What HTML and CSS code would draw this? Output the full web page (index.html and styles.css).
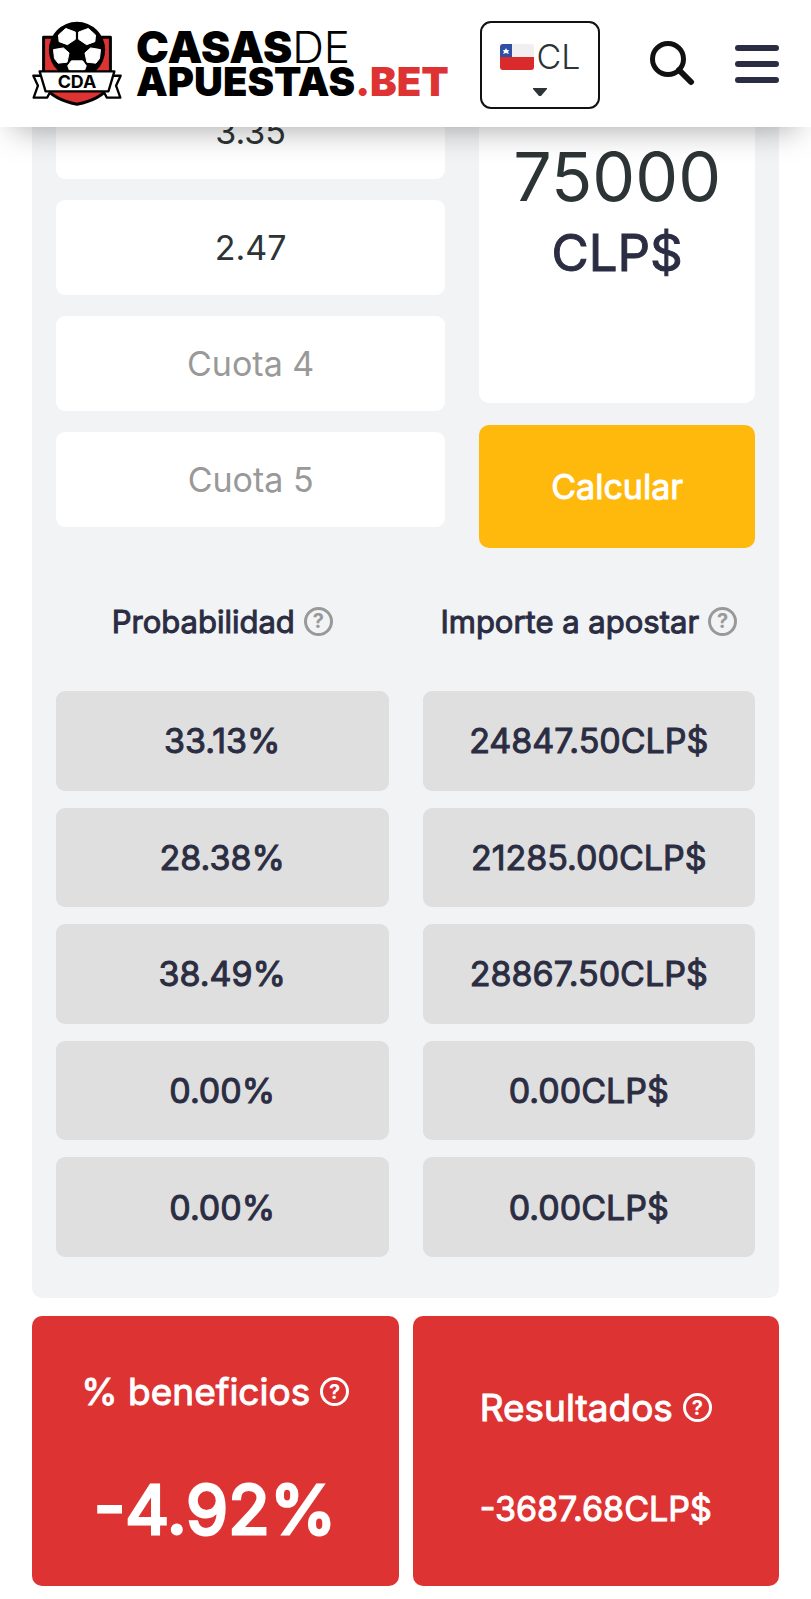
FILE: index.html
```html
<!DOCTYPE html>
<html lang="es">
<head>
<meta charset="utf-8">
<meta name="viewport" content="width=device-width, initial-scale=1">
<title>Calculadora de apuestas</title>
<link rel="stylesheet" href="styles.css">
</head>
<body>
<header class="header">
  <a class="logo" href="#">
    <svg class="logo-badge" viewBox="33 30 272 256" aria-hidden="true">
      <path d="M68 79H270V225Q240 268 169 281Q98 268 68 225Z" fill="#dd3333" stroke="#000" stroke-width="9" stroke-linejoin="round"/>
      <circle cx="169" cy="117" r="85" fill="#000"/>
      <g fill="#fff" stroke="#fff" stroke-width="3" stroke-linejoin="round">
        <path d="M135 52L164 63V85L140 101L115 92L113 72Z"/>
        <path d="M203 52L174 63V85L198 101L223 92L225 72Z"/>
        <path d="M98 116L128 111L145 126L139 154L112 157L101 143Z"/>
        <path d="M240 116L210 111L193 126L199 154L226 157L237 143Z"/>
        <path d="M152 150H186L197 165L192 178H146L141 165Z"/>
      </g>
      <g fill="#fff" stroke="#000" stroke-width="7" stroke-linejoin="round">
        <path d="M62 195H37L51 225L38 261H79L90 240Z"/>
        <path d="M276 195H301L287 225L300 261H259L248 240Z"/>
        <path d="M56 182H282L264 242H74Z"/>
      </g>
      <text class="badge-text" x="169" y="233" text-anchor="middle">CDA</text>
    </svg>
    <span class="logo-words">
      <span class="logo-top">CASAS<span class="logo-thin">DE</span></span>
      <span class="logo-bottom">APUESTAS<span class="logo-red">.BET</span></span>
    </span>
  </a>
  <button class="country" type="button" aria-haspopup="listbox">
    <span class="country-row">
      <svg class="flag" viewBox="0 0 34 26" aria-hidden="true">
        <rect width="34" height="26" rx="3" fill="#f1eff1"/>
        <path d="M0 13H34V23Q34 26 31 26H3Q0 26 0 23Z" fill="#d92b2b"/>
        <path d="M0 13V3Q0 0 3 0H12V13Z" fill="#2f4fa5"/>
        <path d="M6 4L7 6H9L8 8L9 10L6 9L3 10L4 8L3 6H5Z" fill="#fff"/>
      </svg>
      <span>CL</span>
    </span>
    <svg class="caret" viewBox="0 0 14 8" aria-hidden="true"><path d="M0 0H14V1L8 8H6L0 1Z" fill="#2d3436"/></svg>
  </button>
  <button class="icon-button search" type="button" aria-label="Buscar">
    <svg viewBox="0 0 46 46" width="46" height="46" fill="none" stroke="#111" stroke-width="5" stroke-linecap="round"><circle cx="19" cy="18" r="15.5"/><path d="M30 29L42 41" stroke-width="6"/></svg>
  </button>
  <button class="icon-button menu" type="button" aria-label="Menú">
    <svg viewBox="0 0 44 38" width="44" height="38" stroke="#2b2d42" stroke-width="6" stroke-linecap="round"><path d="M3 3H41M3 19H41M3 35H41"/></svg>
  </button>
</header>

<main class="main">
  <section class="panel">
    <form class="form">
      <div class="odds">
        <input class="field" type="text" aria-label="Cuota 2" value="3.35">
        <input class="field" type="text" aria-label="Cuota 3" value="2.47">
        <input class="field" type="text" aria-label="Cuota 4" placeholder="Cuota 4">
        <input class="field" type="text" aria-label="Cuota 5" placeholder="Cuota 5">
      </div>
      <div class="stake">
        <div class="amount">
          <input class="amount-input" id="amount" type="text" value="75000">
          <label class="amount-currency" for="amount">CLP$</label>
        </div>
        <button class="calculate" type="button">Calcular</button>
      </div>
    </form>
    <table class="results">
      <thead>
        <tr>
          <th>Probabilidad <button class="help" type="button">?</button></th>
          <th>Importe a apostar <button class="help" type="button">?</button></th>
        </tr>
      </thead>
      <tbody>
        <tr><td>33.13%</td><td>24847.50CLP$</td></tr>
        <tr><td>28.38%</td><td>21285.00CLP$</td></tr>
        <tr><td>38.49%</td><td>28867.50CLP$</td></tr>
        <tr><td>0.00%</td><td>0.00CLP$</td></tr>
        <tr><td>0.00%</td><td>0.00CLP$</td></tr>
      </tbody>
    </table>
  </section>
  <section class="totals">
    <div class="total">
      <h2 class="total-title">% beneficios <button class="help help-light" type="button">?</button></h2>
      <p class="total-value total-large">-4.92%</p>
    </div>
    <div class="total">
      <h2 class="total-title">Resultados <button class="help help-light" type="button">?</button></h2>
      <p class="total-value">-3687.68CLP$</p>
    </div>
  </section>
</main>
</body>
</html>
```

FILE: styles.css
```css
* {
  box-sizing: border-box;
}

body {
  margin: 0;
  background: #fff;
  color: #2b2d42;
  font-family: Inter, "Liberation Sans", sans-serif;
}

button,
input {
  margin: 0;
  padding: 0;
  border: 0;
  font: inherit;
  color: inherit;
}

button {
  cursor: pointer;
}

.header {
  position: sticky;
  top: 0;
  z-index: 10;
  display: flex;
  align-items: center;
  height: 127px;
  padding: 0 32px;
  background: #fff;
  box-shadow: 0 16px 30px -14px rgba(0, 0, 0, 0.35);
}

.logo {
  display: flex;
  align-items: center;
  gap: 14px;
  color: #000;
  text-decoration: none;
}

.logo-badge {
  width: 90px;
  height: 85px;
}

.badge-text {
  font-size: 54px;
  font-weight: 700;
}

.logo-words {
  display: flex;
  flex-direction: column;
  font-weight: 900;
}

.logo-top {
  font-size: 44px;
  line-height: 36px;
}

.logo-bottom {
  font-size: 40px;
  line-height: 34px;
}

.logo-thin {
  font-weight: 300;
}

.logo-red {
  color: #dd3333;
}

.country {
  display: flex;
  flex-direction: column;
  align-items: center;
  gap: 10px;
  width: 120px;
  height: 88px;
  margin-top: 2px;
  margin-left: auto;
  padding-top: 13px;
  border: 2px solid #111;
  border-radius: 11px;
  background: #fff;
  color: #2d3436;
}

.country-row {
  display: flex;
  align-items: center;
  gap: 3px;
  font-size: 34px;
  font-weight: 300;
  line-height: 42px;
}

.flag {
  width: 34px;
  height: 26px;
}

.caret {
  width: 14px;
  height: 8px;
}

.icon-button {
  display: flex;
  background: none;
}

.search {
  margin-left: 49px;
}

.menu {
  margin-left: 40px;
}

.main {
  margin-top: -43px;
  padding: 0 32px 13px;
}

.panel {
  padding: 0 24px 41px;
  border-radius: 10px;
  background: #f1f3f5;
}

.form {
  display: grid;
  grid-template-columns: 24fr 17fr;
  gap: 34px;
}

.odds {
  display: flex;
  flex-direction: column;
  gap: 21px;
}

.field {
  width: 100%;
  height: 95px;
  border-radius: 9px;
  background: #fff;
  color: #2d3436;
  font-size: 34px;
  text-align: center;
}

.field::placeholder {
  color: #999;
  opacity: 1;
}

.stake {
  display: flex;
  flex-direction: column;
  gap: 22px;
}

.amount {
  display: flex;
  flex-direction: column;
  height: 319px;
  padding-top: 50px;
  border-radius: 10px;
  background: #fff;
  text-align: center;
}

.amount-input {
  width: 100%;
  height: 84px;
  background: none;
  color: #2d3436;
  font-size: 68px;
  text-align: center;
}

.amount-currency {
  font-size: 51px;
  line-height: 70px;
}

.amount-currency,
.calculate,
.results,
.total {
  -webkit-text-stroke: 1px currentColor;
}

.calculate {
  height: 123px;
  border-radius: 10px;
  background: #ffb80c;
  color: #fff;
  font-size: 34px;
}

.results {
  display: block;
  font-size: 34px;
}

.results thead,
.results tbody {
  display: grid;
  gap: 17px;
}

.results tbody {
  grid-auto-rows: 1fr;
  min-height: 566px;
}

.results tr {
  display: grid;
  grid-template-columns: 1fr 1fr;
  gap: 34px;
}

.results th,
.results td {
  display: flex;
  align-items: center;
  justify-content: center;
  padding: 0;
}

.results th {
  gap: 9px;
  height: 143px;
  padding-top: 3px;
  font-size: 31px;
  font-weight: 400;
  white-space: nowrap;
}

.results td {
  border-radius: 9px;
  background: #dfdfdf;
}

.help {
  display: flex;
  align-items: center;
  justify-content: center;
  flex: none;
  width: 29px;
  height: 29px;
  border: 3px solid #999;
  border-radius: 50%;
  background: none;
  color: #999;
  font-size: 20px;
  font-weight: 700;
  line-height: 24px;
  -webkit-text-stroke: 0;
}

.help-light {
  border-color: #fff;
  color: #fff;
}

.totals {
  display: grid;
  grid-template-columns: 1fr 1fr;
  gap: 14px;
  margin-top: 18px;
}

.total {
  display: flex;
  flex-direction: column;
  align-items: center;
  justify-content: center;
  gap: 56px;
  height: 270px;
  padding-top: 13px;
  border-radius: 10px;
  background: #dd3333;
  color: #fff;
}

.total-title {
  display: flex;
  align-items: center;
  gap: 10px;
  margin: 0;
  font-size: 37px;
  font-weight: 400;
  line-height: 46px;
}

.total-value {
  margin: 0;
  font-size: 34px;
  line-height: 44px;
}

.total-large {
  font-size: 68px;
  line-height: 76px;
  -webkit-text-stroke-width: 3px;
}
```
